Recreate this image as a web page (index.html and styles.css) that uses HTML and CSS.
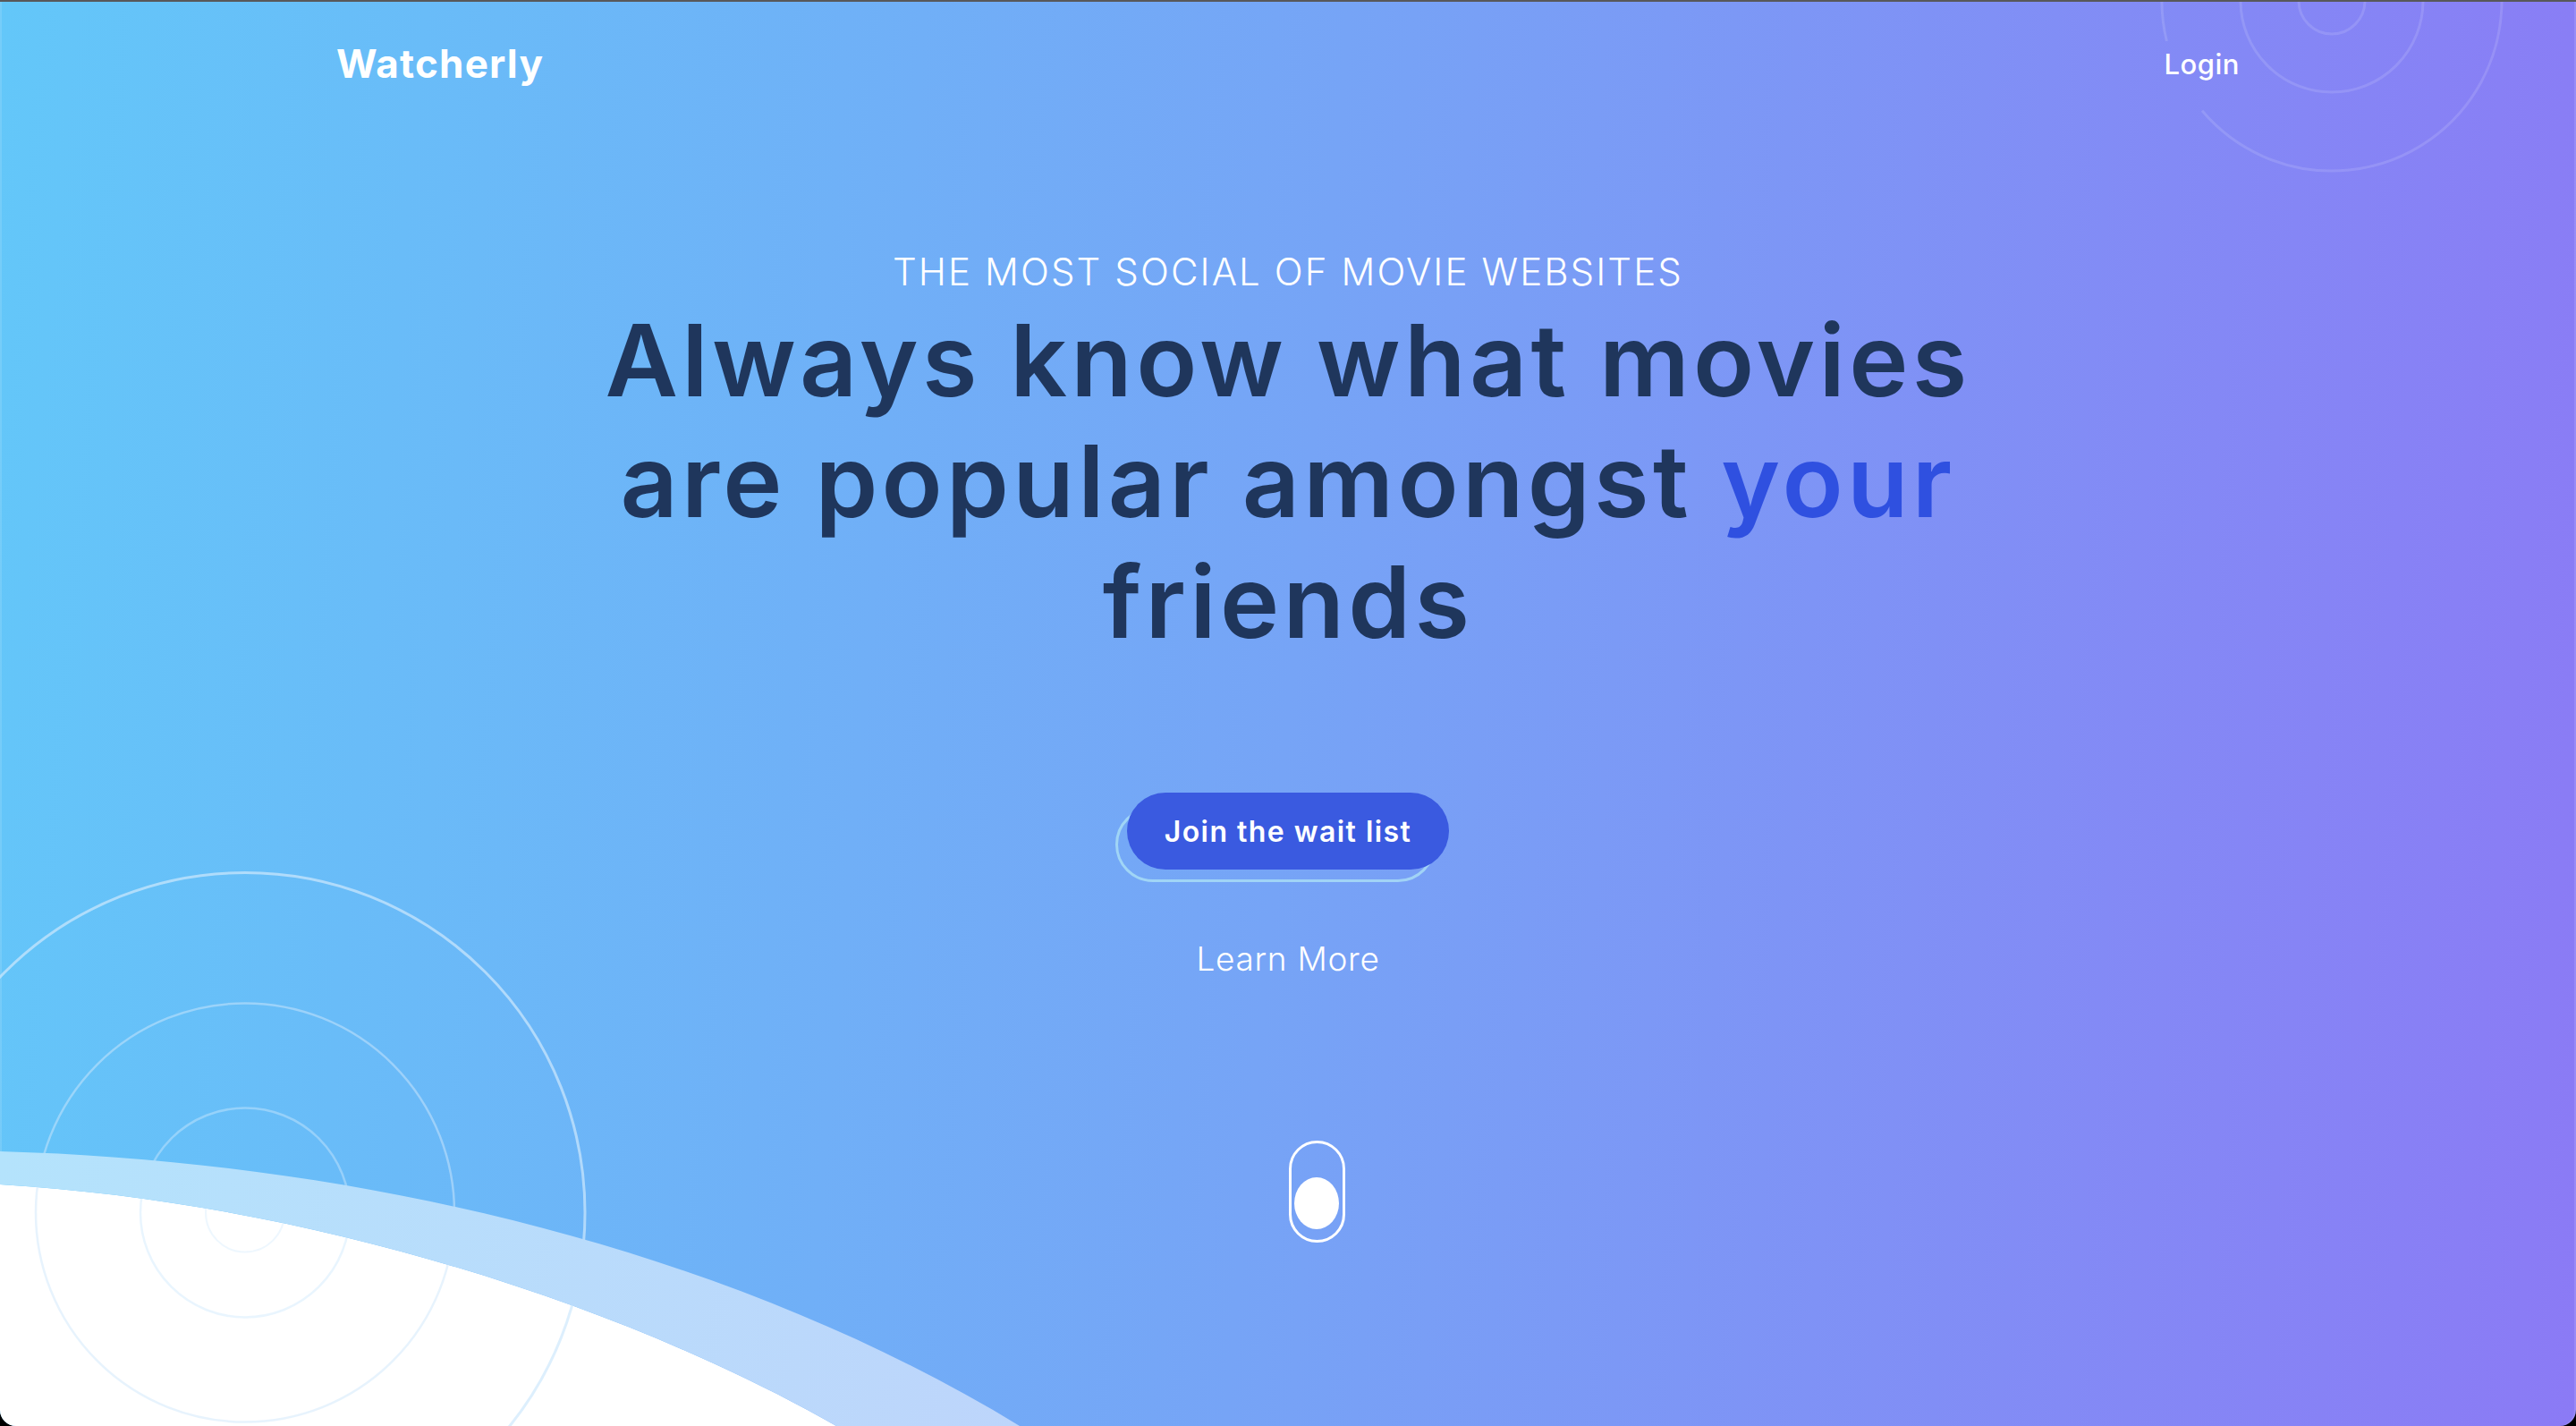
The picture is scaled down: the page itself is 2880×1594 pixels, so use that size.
FILE: index.html
```html
<!DOCTYPE html>
<html lang="en">
<head>
<meta charset="utf-8">
<title>Watcherly</title>
<link rel="stylesheet" href="styles.css">
</head>
<body>
<div class="page">
  <svg class="decor" width="2880" height="1592" viewBox="0 0 2880 1592" xmlns="http://www.w3.org/2000/svg">
    <defs>
      <linearGradient id="band" gradientUnits="userSpaceOnUse" x1="0" y1="1300" x2="1140" y2="1592">
        <stop offset="0" stop-color="#b4e3fc"/>
        <stop offset="1" stop-color="#bdd5fb"/>
      </linearGradient>
    </defs>
    <g class="rings-top" fill="none" stroke="#ffffff" stroke-opacity="0.13" stroke-width="3">
      <circle cx="2607" cy="-1" r="37"/>
      <circle cx="2607" cy="-1" r="102"/>
      <path d="M2422.4,44 A190,190 0 1 1 2462,121.8"/>
    </g>
    <path class="white-wave" d="M0,1322 C350,1343 700,1458 935,1592 L0,1592 Z" fill="#ffffff"/>
    <g class="rings-bottom" fill="none" stroke="#cfe8fc">
      <circle cx="274" cy="1353.5" r="380" stroke-width="3" stroke-opacity="0.7"/>
      <circle cx="274" cy="1353.5" r="234" stroke-width="2.5" stroke-opacity="0.5"/>
      <circle cx="274" cy="1353.5" r="117" stroke-width="2.5" stroke-opacity="0.45"/>
      <circle cx="274" cy="1353.5" r="44" stroke-width="2" stroke-opacity="0.35"/>
    </g>
    <path class="band" d="M0,1285 C450,1298 850,1415 1140,1592 L935,1592 C700,1458 350,1343 0,1322 Z" fill="url(#band)"/>
  </svg>

  <header class="nav">
    <a class="brand" href="#">Watcherly</a>
    <a class="login" href="#">Login</a>
  </header>

  <main class="hero">
    <p class="eyebrow">THE MOST SOCIAL OF MOVIE WEBSITES</p>
    <h1 class="headline">Always know what movies<br>are popular amongst <span class="accent">your</span><br>friends</h1>
    <a class="cta" href="#">Join the wait list</a>
    <a class="learn" href="#">Learn More</a>
    <div class="mouse"><span class="wheel"></span></div>
  </main>
</div>
</body>
</html>
```

FILE: styles.css
```css
html, body {
  margin: 0;
  padding: 0;
  background: #000;
}

body {
  font-family: "Inter", "Liberation Sans", sans-serif;
}

.page {
  position: relative;
  z-index: 0;
  width: 2880px;
  height: 1594px;
  box-sizing: border-box;
  border-top: 2px solid #58585a;
  border-radius: 0 0 18px 18px;
  overflow: hidden;
  background: linear-gradient(95deg, #63c7f9 0%, #76a4f6 50%, #8b7af5 100%);
  box-shadow: inset 2px 0 0 rgba(255,255,255,0.12), inset -2px 0 0 rgba(255,255,255,0.12);
}

.decor {
  position: absolute;
  top: 0;
  left: 0;
  z-index: 0;
  display: block;
}

.nav {
  position: relative;
  z-index: 1;
  height: 140px;
  padding: 0 376px;
  display: flex;
  align-items: center;
  justify-content: space-between;
}

.brand {
  color: #fff;
  text-decoration: none;
  font-weight: 700;
  font-size: 44px;
  letter-spacing: 1.2px;
  line-height: 1;
  margin-top: -3px;
}

.login {
  color: #fff;
  text-decoration: none;
  font-weight: 500;
  font-size: 31px;
  letter-spacing: 0.5px;
  line-height: 1;
  margin-top: -2px;
}

.hero {
  position: relative;
  z-index: 1;
  display: flex;
  flex-direction: column;
  align-items: center;
  padding-top: 137px;
}

.eyebrow {
  margin: 0;
  color: #fff;
  font-weight: 300;
  font-size: 42px;
  line-height: 50px;
  letter-spacing: 2.1px;
}

.headline {
  margin: 6px 0 0;
  color: #1f365c;
  font-weight: 600;
  font-size: 112px;
  line-height: 135px;
  letter-spacing: 4.3px;
  text-align: center;
}

.accent {
  color: #2f50e0;
}

.cta {
  position: relative;
  margin-top: 146px;
  width: 360px;
  height: 86px;
  border-radius: 43px;
  background: #3a5ae0;
  color: #fff;
  text-decoration: none;
  font-weight: 600;
  font-size: 32px;
  letter-spacing: 1.45px;
  display: flex;
  align-items: center;
  justify-content: center;
}

.cta::before {
  content: "";
  position: absolute;
  top: 16px;
  left: -13px;
  right: 15px;
  bottom: -14px;
  border: 3px solid rgba(175, 228, 245, 0.75);
  border-radius: 43px;
  z-index: -1;
}

.learn {
  margin-top: 77px;
  color: #fff;
  text-decoration: none;
  font-weight: 300;
  font-size: 37px;
  line-height: 46px;
  letter-spacing: 0.7px;
}

.mouse {
  margin-top: 180px;
  margin-left: 64px;
  width: 63px;
  height: 114px;
  box-sizing: border-box;
  border: 3px solid #fff;
  border-radius: 32px;
  padding-top: 38px;
  display: flex;
  justify-content: center;
}

.wheel {
  display: block;
  width: 50px;
  height: 58px;
  border-radius: 50%;
  background: #fff;
}
```
